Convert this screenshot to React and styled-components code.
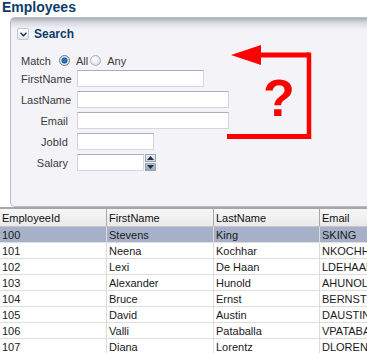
import React from 'react'
import styled, { createGlobalStyle } from 'styled-components'

const GlobalStyle = createGlobalStyle`
    body {
        margin: 0;
        background: #ffffff;
        overflow: hidden;
        font-family: "Liberation Sans", Arial, sans-serif;
    }
`

const employees = [
    { id: 100, first: 'Stevens', last: 'King', email: 'SKING' },
    { id: 101, first: 'Neena', last: 'Kochhar', email: 'NKOCHHAR' },
    { id: 102, first: 'Lexi', last: 'De Haan', email: 'LDEHAAN' },
    { id: 103, first: 'Alexander', last: 'Hunold', email: 'AHUNOLD' },
    { id: 104, first: 'Bruce', last: 'Ernst', email: 'BERNST' },
    { id: 105, first: 'David', last: 'Austin', email: 'DAUSTIN' },
    { id: 106, first: 'Valli', last: 'Pataballa', email: 'VPATABAL' },
    { id: 107, first: 'Diana', last: 'Lorentz', email: 'DLORENTZ' },
]

const fields = [
    { label: 'FirstName', width: 127 },
    { label: 'LastName', width: 152 },
    { label: 'Email', width: 152 },
    { label: 'JobId', width: 77 },
]

const App = () => {
    return (
        <Page>
            <GlobalStyle />
            <Title>Employees</Title>
            <Panel>
                <PanelHeader>
                    <Disclosure>
                        <svg width="7" height="5" viewBox="0 0 7 5">
                            <path d="M0.5 0.8 L3.5 3.8 L6.5 0.8" fill="none" stroke="#1e2f48" strokeWidth="1.4" />
                        </svg>
                    </Disclosure>
                    <PanelTitle>Search</PanelTitle>
                </PanelHeader>
                <Form>
                    <MatchRow>
                        <Label>Match</Label>
                        <Radio checked />
                        <RadioText>All</RadioText>
                        <Radio />
                        <RadioText>Any</RadioText>
                    </MatchRow>
                    {fields.map(f => (
                        <FieldRow key={f.label}>
                            <FieldLabel>{f.label}</FieldLabel>
                            <Input width={f.width} />
                        </FieldRow>
                    ))}
                    <FieldRow>
                        <FieldLabel>Salary</FieldLabel>
                        <Input width={67} />
                        <Spinner>
                            <SpinButton>
                                <svg width="7" height="4" viewBox="0 0 7 4"><path d="M0 4 L3.5 0 L7 4 Z" fill="#1d2f4a" /></svg>
                            </SpinButton>
                            <SpinButton down>
                                <svg width="7" height="4" viewBox="0 0 7 4"><path d="M0 0 L3.5 4 L7 0 Z" fill="#1d2f4a" /></svg>
                            </SpinButton>
                        </Spinner>
                    </FieldRow>
                </Form>
            </Panel>
            <Table>
                <HeadRow>
                    <HeadCell>EmployeeId</HeadCell>
                    <HeadCell>FirstName</HeadCell>
                    <HeadCell>LastName</HeadCell>
                    <HeadCell>Email</HeadCell>
                </HeadRow>
                {employees.map((e, i) => (
                    <Row key={e.id} selected={i === 0}>
                        <Cell>{e.id}</Cell>
                        <Cell>{e.first}</Cell>
                        <Cell>{e.last}</Cell>
                        <Cell>{e.email}</Cell>
                    </Row>
                ))}
            </Table>
            <Annotation width="367" height="353" viewBox="0 0 367 353">
                <path d="M309 55 L258 55" stroke="#ff0000" strokeWidth="5" fill="none" />
                <path d="M231 55 L261 45 L261 65 Z" fill="#ff0000" />
                <path d="M309 52.5 L309 139" stroke="#ff0000" strokeWidth="4.5" fill="none" />
                <path d="M227 136.5 L311 136.5" stroke="#ff0000" strokeWidth="5" fill="none" />
                <text x="279" y="116" textAnchor="middle" fontFamily="Liberation Sans, Arial, sans-serif" fontWeight="bold" fontSize="52" fill="#ff0000">?</text>
            </Annotation>
        </Page>
    )
}

export default App

const Page = styled.div`
    position: relative;
    width: 367px;
    height: 353px;
    overflow: hidden;
`

const Title = styled.div`
    height: 17px;
    line-height: 14px;
    padding-left: 2px;
    font-size: 14px;
    font-weight: bold;
    color: #0e3c68;
`

const Panel = styled.div`
    margin-left: 10px;
    height: 188px;
    border: 1px solid #b9bdc6;
    border-right: none;
    border-radius: 5px 0 0 5px;
    background: linear-gradient(#a9afba 0px, #d8dbe2 5px, #eeeff4 10px, #f3f3f8 14px);
`

const PanelHeader = styled.div`
    display: flex;
    align-items: center;
    gap: 5px;
    padding: 9px 0 0 6px;
    height: 14px;
`

const Disclosure = styled.span`
    display: flex;
    align-items: center;
    justify-content: center;
    width: 10px;
    height: 10px;
    border: 1px solid #c3c7cf;
    border-radius: 2px;
    background: linear-gradient(#ffffff, #e3e6ec);
`

const PanelTitle = styled.span`
    font-size: 12px;
    font-weight: bold;
    color: #0e3c68;
`

const Form = styled.div`
    display: flex;
    flex-direction: column;
    gap: 4px;
    padding: 11px 0 0 10px;
`

const MatchRow = styled.div`
    display: flex;
    align-items: center;
    height: 17px;
    margin-bottom: -3px;
`

const Label = styled.span`
    font-size: 11px;
    color: #3c3c3c;
    margin-right: 8px;
`

const Radio = styled.span`
    box-sizing: border-box;
    width: 11px;
    height: 11px;
    border-radius: 50%;
    border: 1px solid ${p => p.checked ? '#6f7c8e' : '#aab0b9'};
    background: ${p => p.checked
        ? 'radial-gradient(circle at 50% 50%, #1c78c8 0 2px, #0f3f6e 2.6px, #e6eaf0 3.4px, #c9ced6 100%)'
        : 'radial-gradient(circle at 40% 35%, #ffffff 0, #e8eaee 50%, #c8ccd3 100%)'};
`

const RadioText = styled.span`
    font-size: 11px;
    color: #3c3c3c;
    margin: 0 2px 0 6px;
`

const FieldRow = styled.div`
    display: flex;
    align-items: center;
    height: 17px;
`

const FieldLabel = styled.span`
    width: 47px;
    text-align: right;
    margin-right: 9px;
    font-size: 11px;
    color: #3c3c3c;
    white-space: nowrap;
`

const Input = styled.span`
    box-sizing: border-box;
    width: ${p => p.width}px;
    height: 17px;
    background: #ffffff;
    border: 1px solid #d3d6dc;
    border-top-color: #a9aeb7;
`

const Spinner = styled.span`
    display: flex;
    flex-direction: column;
    margin-left: 1px;
    height: 17px;
`

const SpinButton = styled.span`
    display: flex;
    align-items: center;
    justify-content: center;
    width: 11px;
    height: 8px;
    margin-top: ${p => p.down ? '1px' : '0'};
    background: ${p => p.down ? 'linear-gradient(#bcc4d0, #9aa5b6)' : 'linear-gradient(#eef0f4, #cfd4dc)'};
    border: 1px solid #9aa3b0;
    box-sizing: border-box;
`

const Table = styled.div`
    width: 428px;
    border-top: 2px solid #a6a6a6;
    font-size: 11px;
    color: #1a1a1a;
`

const HeadRow = styled.div`
    display: grid;
    grid-template-columns: 107px 107px 106px 108px;
    height: 17px;
    background: linear-gradient(#f7f7f7, #e9e9e9);
    border-bottom: 1px solid #c6c6c6;
`

const HeadCell = styled.div`
    display: flex;
    align-items: center;
    padding-left: 2px;
    border-right: 1px solid #a9a9a9;
    color: #111111;
`

const Row = styled.div`
    display: grid;
    grid-template-columns: 107px 107px 106px 108px;
    height: 15px;
    border-bottom: 1px solid #dedede;
    background: ${p => p.selected ? '#a6b1c9' : '#ffffff'};
`

const Cell = styled.div`
    display: flex;
    align-items: center;
    padding-left: 2px;
    border-right: 1px solid #dcdcdc;
    white-space: nowrap;
    overflow: hidden;
`

const Annotation = styled.svg`
    position: absolute;
    left: 0;
    top: 0;
    pointer-events: none;
`
